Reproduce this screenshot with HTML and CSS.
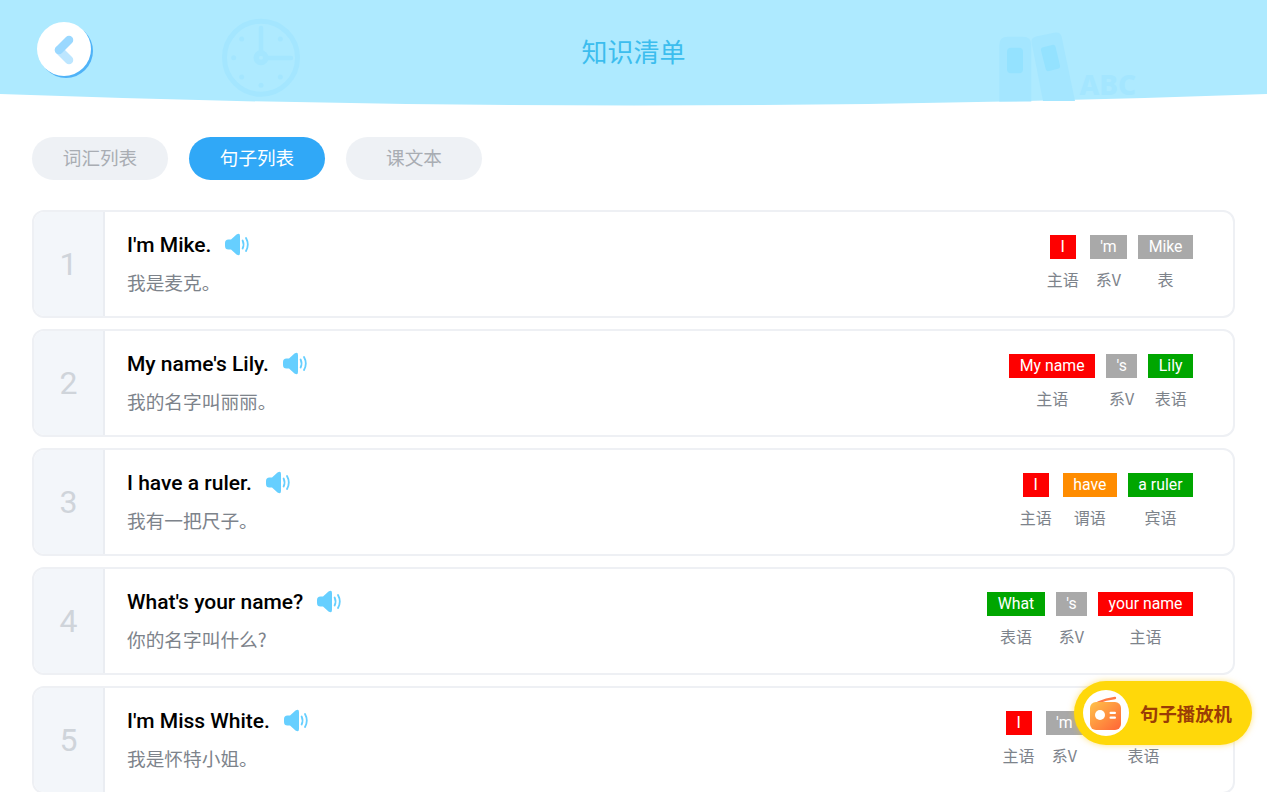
FILE: index.html
```html
<!DOCTYPE html>
<html lang="zh">
<head>
<meta charset="utf-8">
<title>知识清单</title>
<link rel="stylesheet" href="styles.css">
</head>
<body>
<svg width="0" height="0" class="defs">
  <defs>
    <symbol id="speaker" viewBox="0 0 25 24">
      <path class="spk-fill" d="M3.5 6.5H6L11.5 1.5Q15 -.5 15 3V20Q15 23.5 11.5 21.5L6 16.5H3.5Q0 16.5 0 13V10Q0 6.5 3.5 6.5Z"/>
      <path class="spk-line" d="M17.6 7.5Q19.6 11.5 17.6 15.5"/>
      <path class="spk-line" d="M21 5Q24.6 11.5 21 18"/>
    </symbol>
  </defs>
</svg>
<header class="top">
  <svg class="top-bg" viewBox="0 0 1267 106" width="1267" height="106" aria-hidden="true">
    <path class="sky" d="M0 0H1267V94Q633.5 117 0 94Z"/>
    <g class="deco-line">
      <circle cx="261" cy="57.7" r="36.5" stroke-width="5"/>
      <path d="M261 28V58M261 58H291" stroke-width="4.5"/>
    </g>
    <g class="deco">
      <circle cx="261" cy="57.7" r="7.5"/>
      <circle cx="241.7" cy="39" r="2.5"/><circle cx="280.3" cy="39" r="2.5"/>
      <circle cx="233.7" cy="57.7" r="2.5"/>
      <circle cx="241.7" cy="77" r="2.5"/><circle cx="280.3" cy="77" r="2.5"/>
      <circle cx="261" cy="85.3" r="2.5"/>
      <path d="M999.3 45Q999.3 36.7 1007.6 36.7H1023Q1031.3 36.7 1031.3 45V101.5H999.3Z"/>
      <path d="M1031.7 43Q1030.5 38 1036 36.6L1054 32.8Q1060.5 31.6 1061.7 37L1075 101H1043Z"/>
      <text class="abc" x="1079.5" y="95">ABC</text>
    </g>
    <circle class="hub" cx="261" cy="57.7" r="2"/>
    <rect class="deco-dark" x="1007" y="47.7" width="16" height="25.6" rx="4"/>
    <path class="deco-dark" d="M1041 50.5Q1040.5 48 1043 47.3L1052 45Q1055 44.3 1055.6 47L1060 65.5Q1060.5 68 1058 68.7L1049 71Q1046.3 71.7 1045.7 69Z"/>
  </svg>
  <button class="back" aria-label="返回">
    <svg viewBox="0 0 54 54" width="54" height="54" aria-hidden="true">
      <path class="chev-b" d="M32 38L22 28"/>
      <path class="chev-a" d="M32 18L22 28"/>
    </svg>
  </button>
  <h1 class="title">知识清单</h1>
</header>

<nav class="tabs">
  <a class="tab">词汇列表</a>
  <a class="tab tab-on">句子列表</a>
  <a class="tab">课文本</a>
</nav>

<main class="list">
  <article class="card">
    <div class="num">1</div>
    <div class="body">
      <div class="en"><span>I'm Mike.</span><svg class="spk"><use href="#speaker"/></svg></div>
      <div class="zh">我是麦克。</div>
    </div>
    <div class="parts">
      <div class="part"><span class="tag red tag-i">I</span><span class="lab">主语</span></div>
      <div class="part"><span class="tag gray">'m</span><span class="lab">系V</span></div>
      <div class="part"><span class="tag gray">Mike</span><span class="lab">表</span></div>
    </div>
  </article>
  <article class="card">
    <div class="num">2</div>
    <div class="body">
      <div class="en"><span>My name's Lily.</span><svg class="spk"><use href="#speaker"/></svg></div>
      <div class="zh">我的名字叫丽丽。</div>
    </div>
    <div class="parts">
      <div class="part"><span class="tag red">My name</span><span class="lab">主语</span></div>
      <div class="part"><span class="tag gray">'s</span><span class="lab">系V</span></div>
      <div class="part"><span class="tag green">Lily</span><span class="lab">表语</span></div>
    </div>
  </article>
  <article class="card">
    <div class="num">3</div>
    <div class="body">
      <div class="en"><span>I have a ruler.</span><svg class="spk"><use href="#speaker"/></svg></div>
      <div class="zh">我有一把尺子。</div>
    </div>
    <div class="parts">
      <div class="part"><span class="tag red tag-i">I</span><span class="lab">主语</span></div>
      <div class="part"><span class="tag orange">have</span><span class="lab">谓语</span></div>
      <div class="part"><span class="tag green">a ruler</span><span class="lab">宾语</span></div>
    </div>
  </article>
  <article class="card">
    <div class="num">4</div>
    <div class="body">
      <div class="en"><span>What's your name?</span><svg class="spk"><use href="#speaker"/></svg></div>
      <div class="zh">你的名字叫什么?</div>
    </div>
    <div class="parts">
      <div class="part"><span class="tag green">What</span><span class="lab">表语</span></div>
      <div class="part"><span class="tag gray">'s</span><span class="lab">系V</span></div>
      <div class="part"><span class="tag red">your name</span><span class="lab">主语</span></div>
    </div>
  </article>
  <article class="card">
    <div class="num">5</div>
    <div class="body">
      <div class="en"><span>I'm Miss White.</span><svg class="spk"><use href="#speaker"/></svg></div>
      <div class="zh">我是怀特小姐。</div>
    </div>
    <div class="parts">
      <div class="part"><span class="tag red tag-i">I</span><span class="lab">主语</span></div>
      <div class="part"><span class="tag gray">'m</span><span class="lab">系V</span></div>
      <div class="part"><span class="tag gray">Miss White</span><span class="lab">表语</span></div>
    </div>
  </article>
</main>

<button class="player">
  <span class="player-ico">
    <svg viewBox="0 0 46 46" width="46" height="46" aria-hidden="true">
      <defs>
        <linearGradient id="radio" x1="0" y1="0" x2="1" y2="1">
          <stop offset="0" stop-color="#ffc24a"/>
          <stop offset="1" stop-color="#ff6436"/>
        </linearGradient>
      </defs>
      <path class="strap" d="M15 12.5Q23 9 32 8"/>
      <rect x="7" y="12" width="31" height="28" rx="6" fill="url(#radio)"/>
      <circle class="wh" cx="17" cy="25" r="5"/>
      <rect class="wh" x="26.5" y="21.8" width="6.5" height="2.2" rx="1.1"/>
      <rect class="wh" x="26.5" y="26.6" width="6.5" height="2.2" rx="1.1"/>
    </svg>
  </span>
  <span class="player-txt">句子播放机</span>
</button>
</body>
</html>
```
FILE: styles.css
```css
* { box-sizing: border-box; }
html, body { margin: 0; padding: 0; }
body {
  position: relative;
  width: 1267px;
  height: 792px;
  overflow: hidden;
  background: #fff;
  font-family: Roboto, "Noto Sans CJK SC", sans-serif;
}
.defs { position: absolute; }

.top {
  position: relative;
  height: 106px;
  display: flex;
  align-items: flex-start;
  padding: 22px 0 0 37px;
}
.top-bg { position: absolute; left: 0; top: 0; }
.sky { fill: #aeeaff; }
.deco { fill: #a4e6ff; }
.deco-line { fill: none; stroke: #a4e6ff; stroke-linecap: round; }
.deco-dark { fill: #94e2ff; }
.hub { fill: #aeeaff; }
.abc { font-family: "Noto Sans", sans-serif; font-weight: 800; font-size: 28px; }

.back {
  position: relative;
  flex: none;
  width: 54px;
  height: 54px;
  padding: 0;
  border: 0;
  border-radius: 50%;
  background: #fff;
  box-shadow: 2px 2px 0 #4fb2f7;
}
.back svg { display: block; }
.chev-a, .chev-b { fill: none; stroke-width: 8.5; stroke-linecap: round; }
.chev-a { stroke: #9ad8ff; }
.chev-b { stroke: #bde6ff; }

.title {
  position: relative;
  flex: none;
  margin: 11px 0 0;
  width: 1085px;
  text-align: center;
  font-size: 26px;
  line-height: 36px;
  font-weight: 400;
  color: #3cbdee;
  font-family: "Noto Sans CJK SC", sans-serif;
}

.tabs {
  display: flex;
  gap: 21px;
  padding: 31px 0 0 32px;
}
.tab {
  width: 136px;
  height: 43px;
  border-radius: 22px;
  background: #eef1f5;
  color: #a9adb3;
  font: 18.6px/40px "Noto Sans CJK SC", sans-serif;
  text-align: center;
}
.tab-on { background: #30a8f7; color: #fff; }

.list {
  display: flex;
  flex-direction: column;
  gap: 11px;
  padding: 30px 32px 0;
}
.card {
  display: flex;
  flex: none;
  height: 108px;
  border: 2px solid #eef0f4;
  border-radius: 12px;
  overflow: hidden;
  background: #fff;
}
.num {
  flex: none;
  width: 71px;
  background: #f3f6fa;
  border-right: 2px solid #eaedf2;
  color: #cfd4da;
  font-size: 32px;
  line-height: 105px;
  text-align: center;
}
.body {
  flex: 1;
  padding: 18.5px 0 0 22px;
}
.en {
  display: flex;
  align-items: center;
  gap: 14px;
  height: 28px;
  font-size: 21px;
  font-weight: 500;
  color: #000;
}
.spk { width: 25px; height: 24px; flex: none; }
.spk-fill { fill: #66cfff; }
.spk-line { fill: none; stroke: #66cfff; stroke-width: 1.8; stroke-linecap: round; }
.zh {
  margin-top: 10px;
  font: 18.7px/26px "Noto Sans CJK SC", sans-serif;
  color: #7d838b;
}

.parts {
  display: flex;
  gap: 11px;
  padding: 22.5px 40px 0 0;
}
.part {
  display: flex;
  flex-direction: column;
  align-items: center;
}
.tag {
  height: 24px;
  padding: 0 10.5px;
  font-size: 15.8px;
  line-height: 24px;
  color: #fff;
  white-space: nowrap;
}
.tag-i { width: 26px; padding: 0; text-align: center; }
.red { background: #fe0000; }
.gray { background: #a9a9a9; }
.green { background: #00a600; }
.orange { background: #ff8c00; }
.lab {
  margin-top: 8.5px;
  font: 16px/24px "Noto Sans CJK SC", sans-serif;
  color: #7d838b;
  white-space: nowrap;
}

.player {
  position: absolute;
  left: 1074px;
  top: 681px;
  display: flex;
  align-items: center;
  gap: 11px;
  width: 178px;
  height: 64px;
  padding: 0 0 0 9px;
  border: 0;
  border-radius: 32px;
  background: #ffd80a;
  box-shadow: 0 0 6px rgba(255, 200, 0, .5);
}
.player-ico {
  width: 46px;
  height: 46px;
  flex: none;
  border-radius: 50%;
  background: #fff;
}
.player-ico svg { display: block; }
.strap { fill: none; stroke: #ff7a45; stroke-width: 2.4; stroke-linecap: round; }
.wh { fill: #fff; }
.player-txt {
  font: 700 18.4px/22px "Noto Sans CJK SC", sans-serif;
  color: #9a3d06;
  white-space: nowrap;
}
```
